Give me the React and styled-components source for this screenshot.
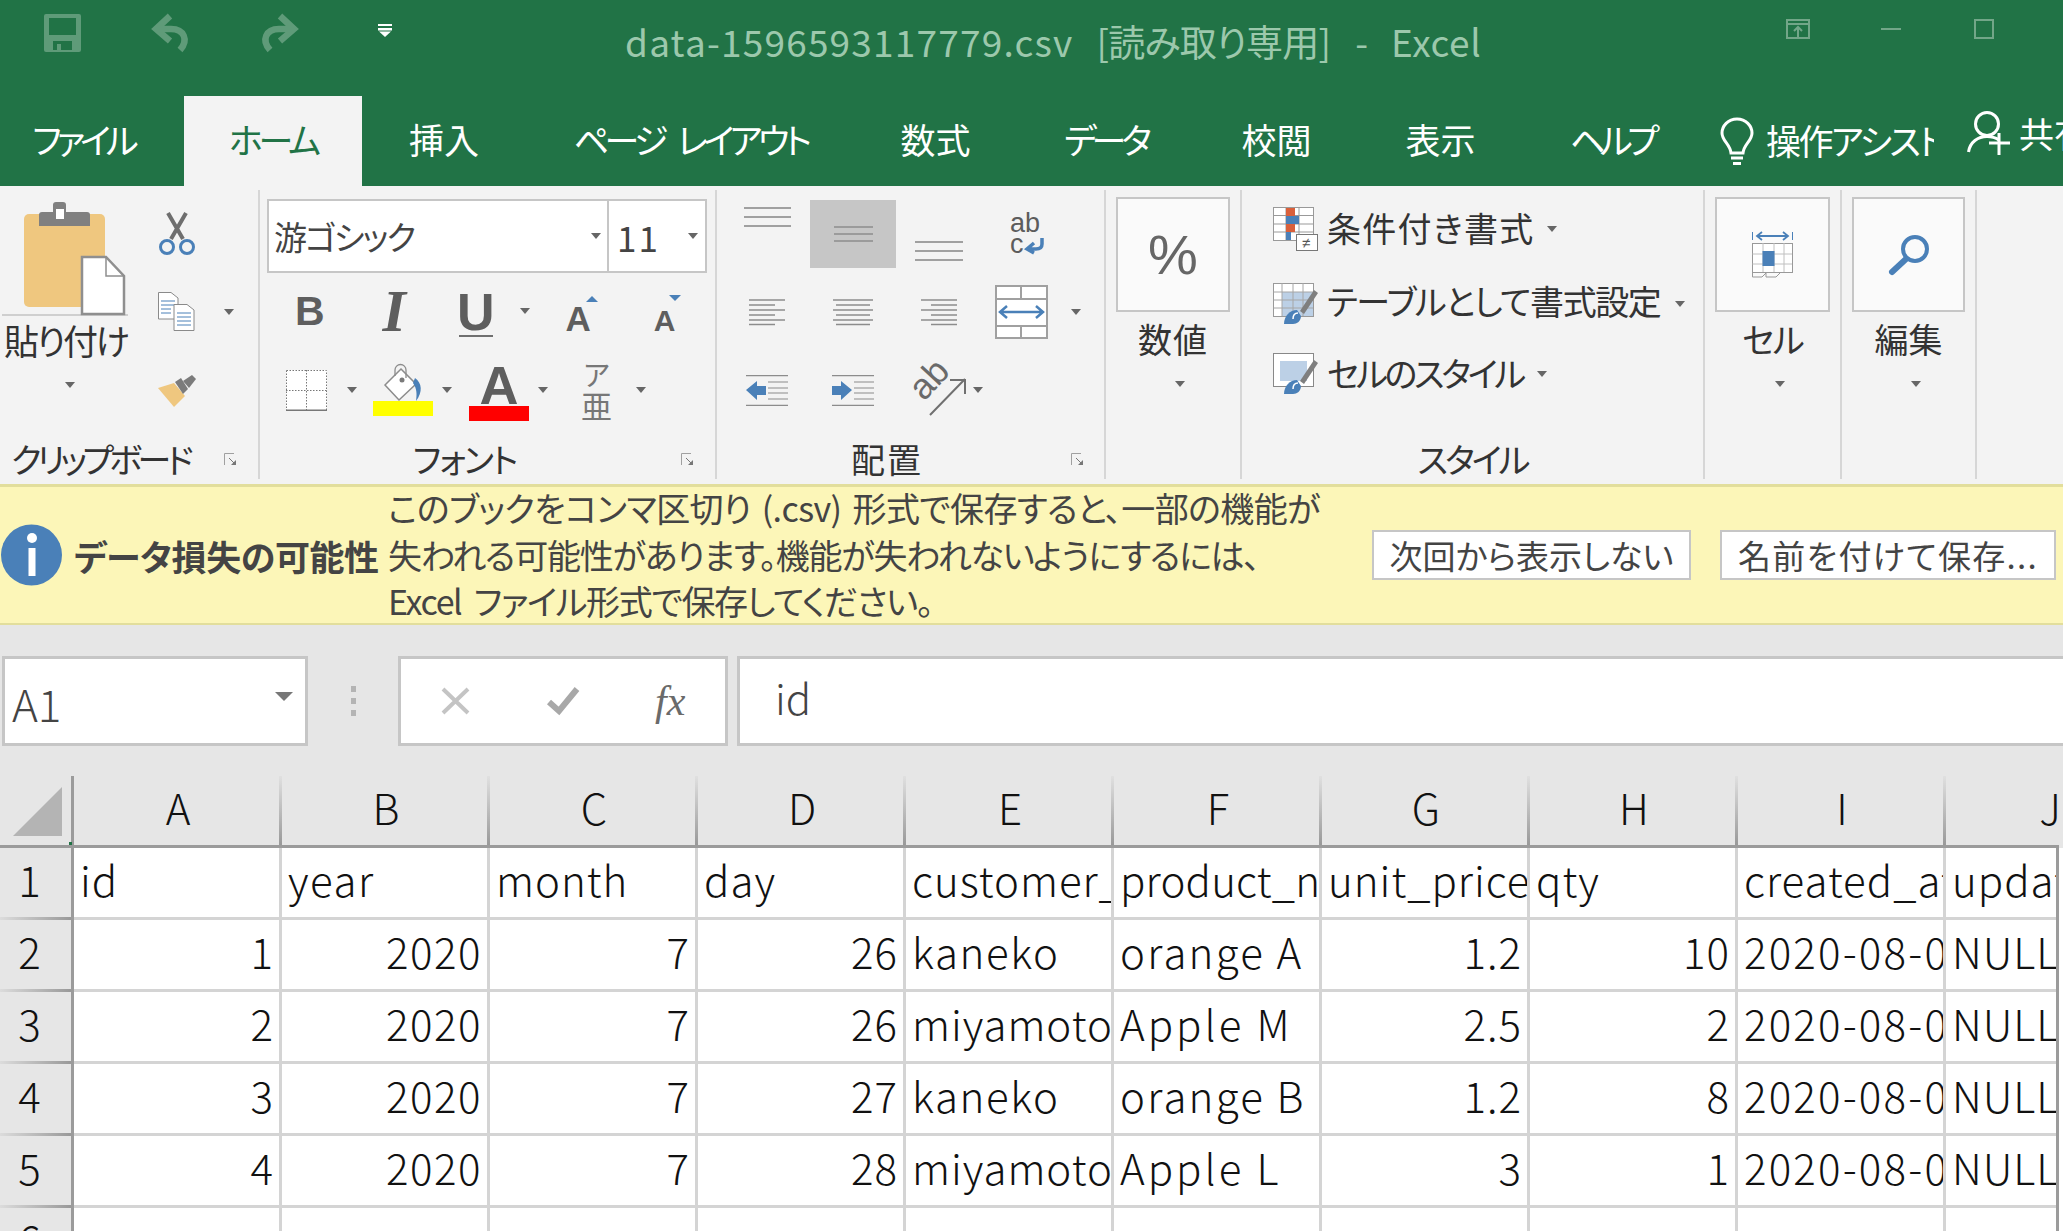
import React from 'react';
import styled, { createGlobalStyle } from 'styled-components';

const JP = `"Noto Sans CJK JP", "Noto Sans", sans-serif`;
const MUTED = '#5f9b79';
const BLUE = '#4a80b8';
const LINE = '#8c8c8c';

const Global = createGlobalStyle`
  html, body { margin: 0; padding: 0; width: 2063px; height: 1231px; overflow: hidden; background: #e6e6e6; }
  body { font-family: ${JP}; font-feature-settings: "palt"; }
  * { box-sizing: border-box; }
`;

const Page = styled.div`width: 2063px; height: 1231px; overflow: hidden; display: flex; flex-direction: column;`;
const Svg = styled.svg`display: block; flex: none; overflow: visible; margin-left: ${p => p.$ml || 0}px;`;

/* ---------- title bar ---------- */
const TitleBar = styled.div`height: 96px; background: #217346; display: flex; align-items: flex-start; padding-left: 44px; flex: none;`;
const QatIcon = styled.div`margin: ${p => p.$mt}px 0 0 ${p => p.$ml}px; flex: none;`;
const Title = styled.div`margin: 16px 0 0 233px; display: flex; font-size: 37px; line-height: 50px; color: #9cc8ac; white-space: pre; font-feature-settings: "palt";`;
const TitlePart = styled.span`margin-left: ${p => p.$ml || 0}px; letter-spacing: ${p => p.$ls || 0}px;`;
const WinControls = styled.div`margin-left: auto; margin-top: 19px; padding-right: 69px; display: flex; align-items: center; height: 20px;`;

/* ---------- tabs ---------- */
const TabBar = styled.div`height: 90px; background: #217346; display: flex; flex: none; overflow: hidden;`;
const Tab = styled.div`
  width: ${p => p.$w}px; flex: none; display: flex; align-items: center; justify-content: center;
  font-size: 35px; line-height: 86px; padding: 0 ${p => p.$pr || 0}px 4px 0; white-space: nowrap;
  letter-spacing: ${p => p.$ls || 0}px; word-spacing: ${p => p.$ws || 0}px;
  color: ${p => (p.$active ? '#217346' : '#fff')};
  background: ${p => (p.$active ? '#f3f3f3' : 'transparent')};
`;
const AssistBox = styled.div`flex: none; display: flex; align-items: center; margin-left: 19px;`;
const AssistText = styled.div`width: 168px; overflow: hidden; white-space: nowrap; font-size: 35px; color: #fff; margin-left: 12px; padding-bottom: 4px; letter-spacing: -2.500px;`;
const ShareBox = styled.div`flex: none; display: flex; margin-left: 33px; padding-top: 15px;`;
const ShareText = styled.div`font-size: 35px; line-height: 44px; color: #fff; margin-left: 9px; white-space: nowrap;`;

/* ---------- ribbon ---------- */
const Ribbon = styled.div`height: 298px; background: #f3f3f3; display: flex; flex: none;`;
const Group = styled.section`width: ${p => p.$w}px; flex: none; display: flex; flex-direction: column;`;
const GroupBody = styled.div`height: 254px; flex: none;`;
const GroupFooter = styled.div`height: 40px; display: flex; align-items: center; padding-bottom: 2px;`;
const GroupLabel = styled.div`flex: 1; text-align: center; font-size: 34px; line-height: 38px; color: #333; white-space: nowrap; letter-spacing: ${p => p.$ls || 0}px;`;
const FooterGap = styled.span`display: block; flex: none; width: ${p => p.$w}px;`;
const Sep = styled.div`width: 2px; flex: none; background: #d6d6d6; margin: 4px 0 5px;`;
const Caret = styled.span`
  display: block; flex: none; width: 0; height: 0; margin-left: ${p => p.$ml || 0}px;
  border-left: ${p => (p.$big ? 9 : 5)}px solid transparent; border-right: ${p => (p.$big ? 9 : 5)}px solid transparent;
  border-top: ${p => (p.$big ? 9 : 6)}px solid ${p => (p.$big ? '#777' : '#666')};
`;

const ClipBody = styled(GroupBody)`display: flex;`;
const PasteCol = styled.div`width: 130px; flex: none; padding: 16px 0 0 2px; display: flex; flex-direction: column;`;
const PasteIconBox = styled.div`padding-left: 22px; height: 114px; border-bottom: 2px solid #cfcfcf; width: 126px;`;
const PasteLabel = styled.div`font-size: 35px; line-height: 50px; color: #333; white-space: nowrap; margin: -1px 0 3px; padding-left: 2px; letter-spacing: -2.500px;`;
const CaretRow = styled.div`display: flex; justify-content: center; margin-top: ${p => p.$mt || 0}px; padding-left: ${p => p.$pl || 0}px;`;
const SmallCol = styled.div`margin-left: 28px; padding-top: 27px; display: flex; flex-direction: column;`;
const SmallRow = styled.div`display: flex; align-items: center; margin-bottom: ${p => p.$mb || 0}px;`;

const FontBody = styled(GroupBody)`padding: 13px 0 0 7px;`;
const FontPick = styled.div`width: 440px; height: 74px; background: #fff; border: 2px solid #c6c6c6; display: flex; align-items: center;`;
const FontName = styled.div`width: 340px; flex: none; display: flex; align-items: center; justify-content: space-between; height: 100%; padding: 0 6px 0 5px; border-right: 2px solid #c6c6c6; font-size: 33px; color: #444; letter-spacing: -2px;`;
const FontSize = styled.div`flex: 1; display: flex; align-items: center; justify-content: space-between; padding: 0 7px 0 8px; font-size: 35px; color: #444; letter-spacing: 2px;`;
const ToolRow = styled.div`display: flex; align-items: ${p => p.$align || 'center'}; height: ${p => p.$h}px; margin-top: ${p => p.$mt}px; padding-left: ${p => p.$pl || 0}px;`;
const Glyph = styled.span`
  display: block; position: relative; flex: none; margin-left: ${p => p.$ml || 0}px; margin-top: ${p => p.$mt || 0}px; color: #5e5e5e;
  font-family: ${p => (p.$serif ? '"Liberation Serif", serif' : '"Liberation Sans", sans-serif')};
  font-weight: bold; font-style: ${p => (p.$italic ? 'italic' : 'normal')};
  font-size: ${p => p.$s}px; line-height: 1;
`;
const Under = styled.span`display: block; width: 34px; height: 2px; background: #6f6f6f; margin-top: -3px;`;
const Stack = styled.div`display: flex; flex-direction: column; align-items: center; flex: none; margin-left: ${p => p.$ml || 0}px;`;
const Grow = styled.span`
  display: block; position: absolute; top: ${p => p.$top}px; right: ${p => p.$right}px; width: 0; height: 0;
  border-left: 6px solid transparent; border-right: 6px solid transparent;
  ${p => (p.$down ? `border-top: 6px solid ${BLUE};` : `border-bottom: 6px solid ${BLUE};`)}
`;
const ColorBar = styled.span`display: block; width: 60px; height: 15px; background: ${p => p.$c};`;
const Phonetic = styled.div`display: flex; flex-direction: column; align-items: center; margin: -3px 0 0 31px; color: #777; line-height: 1; flex: none;`;
const PhoneticTop = styled.span`font-size: 28px; line-height: 26px; margin-bottom: 3px;`;
const PhoneticBase = styled.span`font-size: 31px; line-height: 30px;`;
const BorderSlot = styled.div`margin-top: 6px; flex: none;`;
const CaretSlot = styled.div`margin-top: 23px; margin-left: ${p => p.$ml}px; width: 14px; display: flex; justify-content: center; flex: none;`;
const BigA = styled.span`display: block; font-family: "Liberation Sans", sans-serif; font-weight: bold; font-size: 54px; line-height: 42px; height: 42px; color: #5e5e5e;`;

const AlignBody = styled(GroupBody)`padding: 14px 0 0 7px; display: grid; grid-template-columns: 86px 86px 86px 100px; grid-auto-rows: 68px; row-gap: 10px; align-content: start;`;
const AlignBtn = styled.div`
  height: 68px; display: flex; padding: 7px 0; justify-content: center;
  align-items: ${p => p.$v || 'center'}; background: ${p => (p.$on ? '#c6c6c6' : 'transparent')};
`;
const WideBtn = styled.div`height: 68px; display: flex; align-items: center; padding-left: ${p => p.$pl}px; grid-column: ${p => p.$col};`;
const WrapPad = styled.div`margin: 6px 0 0 -8px;`;

const BigBody = styled(GroupBody)`padding: 11px 10px 0; display: flex; flex-direction: column;`;
const BigBtn = styled.div`height: 115px; background: #fafafa; border: 2px solid #c6c6c6; display: flex; align-items: center; justify-content: center; flex: none;`;
const BigLabel = styled.div`height: 56px; line-height: 54px; padding-bottom: 2px; text-align: center; font-size: 34px; color: #333; letter-spacing: ${p => p.$ls || 0}px;`;
const Percent = styled.span`font-family: "Liberation Sans", sans-serif; font-size: 56px; color: #666; line-height: 1;`;

const StyleBody = styled(GroupBody)`padding: 21px 0 0 31px; display: flex; flex-direction: column;`;
const StyleRow = styled.div`display: flex; align-items: center; height: 44px; margin-bottom: ${p => p.$mb}px;`;
const StyleText = styled.div`font-size: 34px; line-height: 44px; color: #333; margin: 0 0 ${p => p.$up || 0}px 9px; white-space: nowrap; letter-spacing: ${p => p.$ls}px;`;

/* ---------- message bar ---------- */
const MsgBar = styled.div`height: 141px; background: #fcf6b8; border-top: 3px solid #e2de9c; border-bottom: 2px solid #e2de9c; display: flex; align-items: center; padding-left: 1px; flex: none;`;
const MsgTitle = styled.div`width: 314px; flex: none; margin-left: 12px; font-size: 35px; font-weight: bold; color: #444; white-space: nowrap; letter-spacing: -0.400px;`;
const MsgText = styled.div`width: 984px; flex: none; font-size: 34px; line-height: 46.5px; color: #444; white-space: nowrap;`;
const MsgLine = styled.div`letter-spacing: ${p => p.$ls}px; word-spacing: ${p => p.$ws || 0}px;`;
const MsgBtn = styled.div`
  height: 50px; flex: none; width: ${p => p.$w}px; margin-left: ${p => p.$ml || 0}px; background: #fff; border: 2px solid #c6c6c6;
  display: flex; align-items: center; justify-content: center; font-size: 33px; color: #444; white-space: nowrap; letter-spacing: ${p => p.$ls || 0}px;
`;

/* ---------- formula bar ---------- */
const FormulaRow = styled.div`height: 90px; margin-top: 31px; display: flex; flex: none; padding-left: 2px;`;
const NameBox = styled.div`
  width: 306px; flex: none; background: #fff; border: 3px solid #c6c6c6; display: flex; align-items: flex-end; justify-content: space-between;
  padding: 0 12px 12px 7px; font-size: 44px; line-height: 56px; color: #444; font-weight: 300;
`;
const NameCaret = styled.div`padding-bottom: 30px;`;
const Dots = styled.div`width: 90px; flex: none; display: flex; flex-direction: column; align-items: center; justify-content: center; gap: 6px;`;
const Dot = styled.span`display: block; width: 5px; height: 6px; background: #b4b4b4;`;
const FxBox = styled.div`width: 330px; flex: none; background: #fff; border: 3px solid #c6c6c6; display: flex; align-items: center; padding-left: 40px;`;
const FxText = styled.span`font-family: "Liberation Serif", serif; font-style: italic; font-size: 42px; color: #6a6a6a; margin-left: 76px; line-height: 1;`;
const FormulaInput = styled.div`
  flex: 1; margin-left: 9px; background: #fff; border: 3px solid #c6c6c6; border-right: 0; padding: 0 0 10px 35px;
  display: flex; align-items: center; font-size: 42px; color: #444; font-weight: 300;
`;

/* ---------- sheet ---------- */
const Sheet = styled.div`margin-top: 30px; flex: 1; min-height: 0; overflow: hidden; position: relative; background: #fff;`;
const HeadRow = styled.div`display: grid; grid-template-columns: 74px repeat(10, 208px); height: 72px; background: #e6e6e6; border-bottom: 3px solid #9b9b9b; width: 2063px; overflow: hidden;`;
const Corner = styled.div`border-right: 3px solid #9b9b9b; padding: 11px 0 0 13px; position: relative;`;
const CornerMark = styled.span`display: block; position: absolute; right: -1px; bottom: 0; width: 3px; height: 3px; background: #217346;`;
const HeadCell = styled.div`
  background: linear-gradient(#e0e0e0, #999) right / 3px 100% no-repeat;
  text-align: center; font-size: 42px; line-height: 62px; color: #111; font-weight: 300; white-space: nowrap;
`;
const DataRow = styled.div`display: grid; grid-template-columns: 74px repeat(10, 208px); height: 72px; width: 2056px; overflow: hidden;`;
const RowHead = styled.div`
  background: linear-gradient(90deg, #dcdcdc, #999) bottom / 100% 3px no-repeat #e6e6e6;
  border-right: 3px solid #9b9b9b; padding-left: 16px; padding-right: 28px;
  text-align: center; font-size: 42px; line-height: 62px; color: #111; font-weight: 300;
`;
const Cell = styled.div`
  background: #fff; border-right: 3px solid #d4d4d4; border-bottom: 3px solid #d4d4d4; padding: 0 ${p => (p.$num ? 5 : 0)}px 0 ${p => (p.$num ? 0 : 6)}px;
  font-size: 42px; line-height: 62px; color: #111; font-weight: 300; white-space: nowrap; overflow: hidden; text-align: ${p => (p.$num ? 'right' : 'left')};
  letter-spacing: ${p => p.$ls}px;
`;
const RightEdge = styled.div`position: absolute; left: 2056px; top: 69px; bottom: 0; width: 3px; background: #9b9b9b;`;
const RightFill = styled.div`position: absolute; left: 2059px; top: 0; height: 72px; width: 4px; background: #e6e6e6;`;

/* ---------- icons ---------- */
const SaveIcon = () => (
  <Svg width="37" height="38" viewBox="0 0 37 38">
    <path fill={MUTED} fillRule="evenodd" d="M2 0H35a2 2 0 0 1 2 2V36a2 2 0 0 1-2 2H2a2 2 0 0 1-2-2V2a2 2 0 0 1 2-2ZM5 4V21H32V4ZM9 27V36H13V30H17V36H28V27Z" />
  </Svg>
);
const UndoIcon = ({ flip }) => (
  <Svg width="39" height="39" viewBox="0 0 39 39">
    <g transform={flip ? 'translate(39 0) scale(-1 1)' : undefined} fill="none" stroke={MUTED} strokeWidth="6.5">
      <path d="M19 3 L5 16 L19 28" />
      <path d="M6 16 H20 C33 16 38 27 29 37" />
    </g>
  </Svg>
);
const CustomIcon = () => (
  <Svg width="14" height="13" viewBox="0 0 14 13" fill="#fff">
    <rect width="14" height="2" /><rect y="4" width="14" height="2.5" /><path d="M1 7.5H13L7 13Z" />
  </Svg>
);
const WinRestore = () => (
  <Svg width="24" height="20" viewBox="0 0 24 20" fill="none" stroke="#72a688" strokeWidth="2">
    <rect x="1" y="1" width="22" height="18" /><path d="M1 5H23M12 18V8M8 12L12 8L16 12" />
  </Svg>
);
const WinMin = () => <Svg $ml={71} width="20" height="2" viewBox="0 0 20 2"><rect width="20" height="2" fill="#72a688" /></Svg>;
const WinMax = () => (
  <Svg $ml={73} width="20" height="20" viewBox="0 0 20 20" fill="none" stroke="#72a688" strokeWidth="2"><rect x="1" y="1" width="18" height="18" /></Svg>
);
const BulbIcon = () => (
  <Svg width="34" height="48" viewBox="0 0 34 48" fill="none" stroke="#fff" strokeWidth="3">
    <path d="M17 2C8 2 2 9 2 16C2 24 10 27 11 36H23C24 27 32 24 32 16C32 9 26 2 17 2Z" /><path d="M11 41H23" /><path d="M13 46.5H21" />
  </Svg>
);
const PersonIcon = () => (
  <Svg width="43" height="44" viewBox="0 0 43 44" fill="none" stroke="#fff" strokeWidth="3">
    <circle cx="20" cy="13" r="11.5" /><path d="M1.5 41C3 31 11 25.500 20 25.500C25 25.500 29 27 32 29" /><path d="M22 32H43M32 22V44" />
  </Svg>
);
const PasteIcon = () => (
  <Svg width="101" height="113" viewBox="0 0 101 113">
    <rect y="12" width="81" height="93" rx="5" fill="#efc77f" />
    <path d="M15 24V13a3 3 0 0 1 3-3H29V3a3 3 0 0 1 3-3H39a3 3 0 0 1 3 3V10H63a3 3 0 0 1 3 3V24Z" fill="#808080" />
    <rect x="32" y="7" width="8" height="10" fill="#fff" />
    <path d="M58 55H82L100 74V112H58Z" fill="#fff" stroke="#8f8f8f" strokeWidth="2.500" />
    <path d="M82 55V74H100" fill="none" stroke="#8f8f8f" strokeWidth="1.500" />
  </Svg>
);
const ScissorsIcon = () => (
  <Svg width="38" height="42" viewBox="0 0 38 42" fill="none">
    <path d="M10 0L25 26M28 0L13 26" stroke="#6e6e6e" strokeWidth="4" />
    <circle cx="9" cy="34" r="6.500" stroke={BLUE} strokeWidth="3" /><circle cx="29" cy="34" r="6.500" stroke={BLUE} strokeWidth="3" />
  </Svg>
);
const CopyIcon = () => (
  <Svg width="37" height="39" viewBox="0 0 37 39">
    <path d="M.5.5H13L20 6V27H.5Z" fill="#fff" stroke="#8a8a8a" />
    <path d="M3 9H17M3 13H17M3 17H13M3 21H13" stroke={BLUE} />
    <path d="M16 12.500H29L36 18V38.500H16Z" fill="#fff" stroke="#8a8a8a" />
    <path d="M19 21H33M19 25H33M19 29H33M19 33H33" stroke={BLUE} />
  </Svg>
);
const BrushIcon = () => (
  <Svg width="39" height="32" viewBox="0 0 39 32">
    <path d="M0 13L16 8L27 21L16 32Z" fill="#efc77f" />
    <path d="M17 7L23 3L30 14L25 19Z" fill="#7b7b7b" />
    <path d="M25 6L34 0L38 4L31 13Z" fill="#7b7b7b" />
  </Svg>
);
const Expander = ({ ml }) => (
  <Svg $ml={ml} width="13" height="13" viewBox="0 0 13 13" fill="none">
    <path d="M10 .5H.5V12" stroke="#a0a0a0" /><path d="M5 5L11 11" stroke="#777" /><path d="M12 7V12H7Z" fill="#777" />
  </Svg>
);
const BorderIcon = () => (
  <Svg width="41" height="41" viewBox="0 0 41 41">
    <rect width="41" height="41" fill="#fff" />
    <path d="M.5 .5H40.500V40M.5 .5V40M20.500 0V40M0 20.500H41" fill="none" stroke="#777" strokeDasharray="1.500 1.500" />
    <path d="M0 40.300H41" stroke="#777" strokeWidth="1.400" />
  </Svg>
);
const FillIcon = () => (
  <Svg width="37" height="37" viewBox="0 0 37 37" fill="none">
    <path d="M16 5L31 20L14 36L0 21Z" fill="#fff" stroke="#8c8c8c" strokeWidth="1.500" />
    <path d="M10 12V6A5.500 5.500 0 0 1 21 6V14" stroke="#8c8c8c" strokeWidth="1.300" />
    <circle cx="17" cy="16" r="2.500" fill="#7a7a7a" />
    <path d="M30 14C37 19 38 28 31 37C32 30 32 25 28 19Z" fill={BLUE} />
  </Svg>
);
const Lines = ({ w, h, rows, sw = 1.5, c = LINE }) => (
  <Svg width={w} height={h} viewBox={`0 0 ${w} ${h}`}>
    {rows.map(([a, b, y]) => <line key={`${y}-${a}`} x1={a} x2={b} y1={y} y2={y} stroke={c} strokeWidth={sw} />)}
  </Svg>
);
const WrapIcon = () => (
  <Svg width="36" height="40" viewBox="0 0 36 40">
    <text x="0" y="19" fontFamily='"Liberation Sans", sans-serif' fontSize="27" fill="#5c5c5c">ab</text>
    <text x="0" y="40" fontFamily='"Liberation Sans", sans-serif' fontSize="27" fill="#5c5c5c">c</text>
    <path d="M32 25V31C32 35 29 36 26 36H18M24 30L17 36L24 40" fill="none" stroke={BLUE} strokeWidth="3.500" />
  </Svg>
);
const MergeIcon = () => (
  <Svg width="53" height="54" viewBox="0 0 53 54">
    <rect x="1" y="1" width="51" height="52" fill="#fff" stroke="#a0a0a0" strokeWidth="2" />
    <path d="M1 14H52M1 41H52M26 1V14M26 41V53" stroke="#a0a0a0" strokeWidth="2" />
    <path d="M5 27H48M12 21L5 27L12 33M41 21L48 27L41 33" fill="none" stroke={BLUE} strokeWidth="2.500" />
  </Svg>
);
const IndentIcon = ({ dec }) => (
  <Svg width="42" height="31" viewBox="0 0 42 31">
    <path d="M0 .7H42M0 30.300H42M22 7H42M22 13H42M22 18H42M22 24H42" stroke="#8c8c8c" strokeWidth="1.200" />
    {dec
      ? <path d="M0 15L11 6V11H20V20H11V25Z" fill={BLUE} />
      : <path d="M20 15L9 6V11H0V20H9V25Z" fill={BLUE} />}
  </Svg>
);
const OrientIcon = () => (
  <Svg width="55" height="51" viewBox="0 0 55 51">
    <text transform="translate(12 37) rotate(-47)" fontFamily='"Liberation Sans", sans-serif' fontSize="36" fill="#6a6a6a">ab</text>
    <path d="M18 50L53 14M38 15H53V29" fill="none" stroke="#707070" strokeWidth="2" />
  </Svg>
);
const CondIcon = () => (
  <Svg width="45" height="44" viewBox="0 0 45 44">
    <rect x=".5" y=".5" width="40" height="33" fill="#fff" stroke="#999" />
    <path d="M.5 8.500H40M.5 17H40M.5 25H40M13 0V33M26 0V33" stroke="#999" />
    <rect x="13" y="1" width="9" height="8" fill="#d9603b" /><rect x="13" y="9" width="13" height="8" fill={BLUE} />
    <rect x="13" y="17" width="9" height="8" fill="#d9603b" /><rect x="13" y="25" width="5" height="8" fill={BLUE} />
    <rect x="23.500" y="27.500" width="21" height="16" fill="#fff" stroke="#777" />
    <text x="29" y="41" fontFamily='"Liberation Sans", sans-serif' fontSize="15" fill="#555">≠</text>
  </Svg>
);
const Brush2 = () => (
  <>
    <path d="M45 10L31 31L27 28L41 7Z" fill="#7f7f7f" />
    <path d="M11 41C11 33 17 27 24 27L28 33C28 38 24 41 20 41Z" fill={BLUE} />
    <path d="M20 36C20 32 22 30 25 30" fill="none" stroke="#fff" strokeWidth="1.500" />
  </>
);
const TableStyleIcon = () => (
  <Svg width="45" height="42" viewBox="0 0 45 42">
    <rect x=".5" y=".5" width="40" height="33" fill="#fff" stroke="#999" />
    <rect x="9" y="9" width="31" height="24" fill="#bcd0e6" />
    <path d="M.5 9H40M.5 17H40M.5 25H40M9 0V33M20 0V33M30 0V33" stroke="#a6a6a6" />
    <Brush2 />
  </Svg>
);
const CellStyleIcon = () => (
  <Svg width="45" height="42" viewBox="0 0 45 42">
    <rect x=".5" y=".5" width="40" height="33" fill="#fff" stroke="#888" />
    <rect x="7" y="8" width="27" height="20" fill="#bcd0e6" />
    <Brush2 />
  </Svg>
);
const CellsIcon = () => (
  <Svg width="41" height="45" viewBox="0 0 41 45">
    <path d="M.5 0V8M40.500 0V8" stroke={BLUE} />
    <path d="M5 4H36M10 0L5 4L10 8M31 0L36 4L31 8" fill="none" stroke={BLUE} strokeWidth="1.800" />
    <rect x=".5" y="11.500" width="40" height="29" fill="#fff" stroke="#999" />
    <path d="M.5 22H40M.5 32H40M11 11V40M22 11V40M32 11V40" stroke="#c0c0c0" />
    <rect x="10.500" y="19" width="12" height="15" fill={BLUE} />
    <path d="M.5 41V45H10L14 41M14 41V45H24L28 41" fill="none" stroke="#999" />
  </Svg>
);
const SearchIcon = () => (
  <Svg width="41" height="40" viewBox="0 0 41 40" fill="none" stroke={BLUE}>
    <circle cx="27" cy="14" r="12" strokeWidth="4" /><path d="M18 24L4 37" strokeWidth="6" strokeLinecap="round" />
  </Svg>
);
const InfoIcon = () => (
  <Svg width="61" height="62" viewBox="0 0 61 62">
    <circle cx="30.500" cy="31" r="30.500" fill={BLUE} />
    <circle cx="31" cy="14" r="5" fill="#fff" /><rect x="27.500" y="24" width="7" height="28" fill="#fff" />
  </Svg>
);
const CancelIcon = () => (
  <Svg width="29" height="26" viewBox="0 0 29 26" fill="none" stroke="#c4c4c4" strokeWidth="4"><path d="M2 1L27 25M27 1L2 25" /></Svg>
);
const CheckIcon = () => (
  <Svg $ml={78} width="31" height="26" viewBox="0 0 31 26" fill="none" stroke="#a8a8a8" strokeWidth="6"><path d="M1 14L11 23L29 1" /></Svg>
);
const CornerIcon = () => (
  <Svg width="49" height="49" viewBox="0 0 49 49"><path d="M49 0V49H0Z" fill="#b4b4b4" /></Svg>
);

/* ---------- data ---------- */
const tabs = [
  { t: 'ファイル', w: 181, ls: -5, pr: 18 }, { t: 'ホーム', w: 181, ls: -4 }, { t: '挿入', w: 164 },
  { t: 'ページ レイアウト', w: 329, ls: -4.5, ws: 10 }, { t: '数式', w: 161 },
  { t: 'データ', w: 179, ls: -5 }, { t: '校閲', w: 163 }, { t: '表示', w: 165 }, { t: 'ヘルプ', w: 178, ls: -5.5 },
].map((tab, i) => (i === 1 ? { ...tab, w: 178, active: true } : i === 0 ? { ...tab, w: 184 } : tab));
const heads = ['A', 'B', 'C', 'D', 'E', 'F', 'G', 'H', 'I', 'J'];
const N = 1;
const rows = [
  [['id'], ['year', 0, 1.5], ['month'], ['day'], ['customer_name'], ['product_name', 0, 0.2], ['unit_price'], ['qty'], ['created_at'], ['updated_at']],
  [[1, N], [2020, N, 1.5], [7, N], [26, N], ['kaneko', 0, 1.6], ['orange A', 0, 2.2], [1.2, N], [10, N], ['2020-08-05 02:11:57', 0, 2.2], ['NULL']],
  [[2, N], [2020, N, 1.5], [7, N], [26, N], ['miyamoto'], ['Apple M', 0, 3], [2.5, N], [2, N], ['2020-08-05 02:11:57', 0, 2.2], ['NULL']],
  [[3, N], [2020, N, 1.5], [7, N], [27, N], ['kaneko', 0, 1.6], ['orange B', 0, 2.2], [1.2, N], [8, N], ['2020-08-05 02:11:57', 0, 2.2], ['NULL']],
  [[4, N], [2020, N, 1.5], [7, N], [28, N], ['miyamoto'], ['Apple L', 0, 3], [3, N], [1, N], ['2020-08-05 02:11:57', 0, 2.2], ['NULL']],
  Array(10).fill(['']),
];

const leftLines = [[0, 36, 1], [0, 26, 6], [0, 36, 11], [0, 26, 16], [0, 36, 21], [0, 26, 25.5]];
const centerLines = [[0, 40, 1], [3, 37, 6], [0, 40, 11], [3, 37, 16], [0, 40, 21], [3, 37, 25.5]];
const rightLines = [[0, 36, 1], [10, 36, 6], [0, 36, 11], [10, 36, 16], [0, 36, 21], [10, 36, 25.5]];

export default function App() {
  return (
    <Page>
      <Global />
      <TitleBar>
        <QatIcon $mt={14} $ml={0}><SaveIcon /></QatIcon>
        <QatIcon $mt={13} $ml={70}><UndoIcon /></QatIcon>
        <QatIcon $mt={13} $ml={70}><UndoIcon flip /></QatIcon>
        <QatIcon $mt={24} $ml={79}><CustomIcon /></QatIcon>
        <Title>
          <TitlePart $ls={1.2}>data-1596593117779.csv</TitlePart>
          <TitlePart $ml={23} $ls={-0.8}>[読み取り専用]</TitlePart>
          <TitlePart $ml={25}>-</TitlePart>
          <TitlePart $ml={23} $ls={0.6}>Excel</TitlePart>
        </Title>
        <WinControls><WinRestore /><WinMin /><WinMax /></WinControls>
      </TitleBar>

      <TabBar>
        {tabs.map(({ t, w, ls, ws, pr, active }) => <Tab key={t} $w={w} $ls={ls} $ws={ws} $pr={pr} $active={active}>{t}</Tab>)}
        <AssistBox><BulbIcon /><AssistText>操作アシスト</AssistText></AssistBox>
        <ShareBox><PersonIcon /><ShareText>共有</ShareText></ShareBox>
      </TabBar>

      <Ribbon>
        <Group $w={258}>
          <ClipBody>
            <PasteCol>
              <PasteIconBox><PasteIcon /></PasteIconBox>
              <PasteLabel>貼り付け</PasteLabel>
              <CaretRow $mt={14} $pl={8}><Caret /></CaretRow>
            </PasteCol>
            <SmallCol>
              <SmallRow $mb={37}><ScissorsIcon /></SmallRow>
              <SmallRow $mb={44}><CopyIcon /><Caret $ml={29} /></SmallRow>
              <SmallRow><BrushIcon /></SmallRow>
            </SmallCol>
          </ClipBody>
          <GroupFooter>
            <GroupLabel $ls={-4.5}>クリップボード</GroupLabel>
            <Expander ml={24} /><FooterGap $w={21} />
          </GroupFooter>
        </Group>
        <Sep />

        <Group $w={455}>
          <FontBody>
            <FontPick>
              <FontName>游ゴシック<Caret /></FontName>
              <FontSize>11<Caret /></FontSize>
            </FontPick>
            <ToolRow $h={46} $mt={15} $pl={28}>
              <Glyph $s={41}>B</Glyph>
              <Glyph $s={60} $serif $italic $ml={58}>I</Glyph>
              <Stack $ml={51}><Glyph $s={52}>U</Glyph><Under /></Stack>
              <Caret $ml={25} />
              <Glyph $s={35} $ml={36} $mt={14}>A<Grow $top={-5} $right={-7} /></Glyph>
              <Glyph $s={30} $ml={63} $mt={20}>A<Grow $top={-11} $right={-6} $down /></Glyph>
            </ToolRow>
            <ToolRow $h={57} $mt={30} $pl={19} $align="flex-start">
              <BorderSlot><BorderIcon /></BorderSlot>
              <CaretSlot $ml={18}><Caret /></CaretSlot>
              <Stack $ml={14}><FillIcon /><ColorBar $c="#ffff00" /></Stack>
              <CaretSlot $ml={7}><Caret /></CaretSlot>
              <Stack $ml={15}><BigA>A</BigA><ColorBar $c="#ff0000" /></Stack>
              <CaretSlot $ml={7}><Caret /></CaretSlot>
              <Phonetic><PhoneticTop>ア</PhoneticTop><PhoneticBase>亜</PhoneticBase></Phonetic>
              <CaretSlot $ml={22}><Caret /></CaretSlot>
            </ToolRow>
          </FontBody>
          <GroupFooter>
            <GroupLabel $ls={-2}>フォント</GroupLabel>
            <Expander ml={12} /><FooterGap $w={21} />
          </GroupFooter>
        </Group>
        <Sep />

        <Group $w={387}>
          <AlignBody>
            <AlignBtn $v="flex-start"><Lines w={47} h={20} sw={2} c="#a0a0a0" rows={[[0, 47, 1], [0, 47, 10], [0, 47, 19]]} /></AlignBtn>
            <AlignBtn $on><Lines w={39} h={16} rows={[[0, 39, 1], [0, 39, 8], [0, 39, 15]]} /></AlignBtn>
            <AlignBtn $v="flex-end"><Lines w={48} h={20} sw={2} c="#a0a0a0" rows={[[0, 48, 1], [0, 48, 10], [0, 48, 19]]} /></AlignBtn>
            <AlignBtn $v="flex-start"><WrapPad><WrapIcon /></WrapPad></AlignBtn>

            <AlignBtn><Lines w={36} h={27} rows={leftLines} /></AlignBtn>
            <AlignBtn><Lines w={40} h={27} rows={centerLines} /></AlignBtn>
            <AlignBtn><Lines w={36} h={27} rows={rightLines} /></AlignBtn>
            <WideBtn $pl={13}><MergeIcon /><Caret $ml={23} /></WideBtn>

            <AlignBtn><IndentIcon dec /></AlignBtn>
            <AlignBtn><IndentIcon /></AlignBtn>
            <WideBtn $pl={16} $col="3 / span 2"><OrientIcon /><Caret $ml={6} /></WideBtn>
          </AlignBody>
          <GroupFooter>
            <GroupLabel $ls={2}>配置</GroupLabel>
            <Expander ml={14} /><FooterGap $w={20} />
          </GroupFooter>
        </Group>
        <Sep />

        <Group $w={134}>
          <BigBody>
            <BigBtn><Percent>%</Percent></BigBtn>
            <BigLabel $ls={1}>数値</BigLabel>
            <CaretRow $mt={13} $pl={14}><Caret /></CaretRow>
          </BigBody>
        </Group>
        <Sep />

        <Group $w={461}>
          <StyleBody>
            <StyleRow $mb={31}><CondIcon /><StyleText $ls={1.3} $up={2}>条件付き書式</StyleText><Caret $ml={12} /></StyleRow>
            <StyleRow $mb={26}><TableStyleIcon /><StyleText $ls={-1.4} $up={6}>テーブルとして書式設定</StyleText><Caret $ml={15} /></StyleRow>
            <StyleRow $mb={0}><CellStyleIcon /><StyleText $ls={-3.3} $up={2}>セルのスタイル</StyleText><Caret $ml={14} /></StyleRow>
          </StyleBody>
          <GroupFooter><GroupLabel $ls={-3}>スタイル</GroupLabel></GroupFooter>
        </Group>
        <Sep />

        <Group $w={135}>
          <BigBody>
            <BigBtn><CellsIcon /></BigBtn>
            <BigLabel $ls={-2}>セル</BigLabel>
            <CaretRow $mt={13} $pl={14}><Caret /></CaretRow>
          </BigBody>
        </Group>
        <Sep />

        <Group $w={133}>
          <BigBody>
            <BigBtn><SearchIcon /></BigBtn>
            <BigLabel>編集</BigLabel>
            <CaretRow $mt={13} $pl={14}><Caret /></CaretRow>
          </BigBody>
        </Group>
        <Sep />
      </Ribbon>

      <MsgBar>
        <InfoIcon />
        <MsgTitle>データ損失の可能性</MsgTitle>
        <MsgText>
          <MsgLine $ls={-0.6} $ws={4}>このブックをコンマ区切り (.csv) 形式で保存すると、一部の機能が</MsgLine>
          <MsgLine $ls={-1.2}>失われる可能性があります。機能が失われないようにするには、</MsgLine>
          <MsgLine $ls={-1.35} $ws={6}>Excel ファイル形式で保存してください。</MsgLine>
        </MsgText>
        <MsgBtn $w={319}>次回から表示しない</MsgBtn>
        <MsgBtn $w={336} $ml={29} $ls={1.3}>名前を付けて保存...</MsgBtn>
      </MsgBar>

      <FormulaRow>
        <NameBox>A1<NameCaret><Caret $big /></NameCaret></NameBox>
        <Dots><Dot /><Dot /><Dot /></Dots>
        <FxBox><CancelIcon /><CheckIcon /><FxText>fx</FxText></FxBox>
        <FormulaInput>id</FormulaInput>
      </FormulaRow>

      <Sheet>
        <HeadRow>
          <Corner><CornerIcon /><CornerMark /></Corner>
          {heads.map(h => <HeadCell key={h}>{h}</HeadCell>)}
        </HeadRow>
        {rows.map((r, i) => (
          <DataRow key={i}>
            <RowHead>{i + 1}</RowHead>
            {r.map(([v, n, ls], j) => <Cell key={j} $num={!!n} $ls={ls ?? 1}>{v}</Cell>)}
          </DataRow>
        ))}
        <RightEdge /><RightFill />
      </Sheet>
    </Page>
  );
}
